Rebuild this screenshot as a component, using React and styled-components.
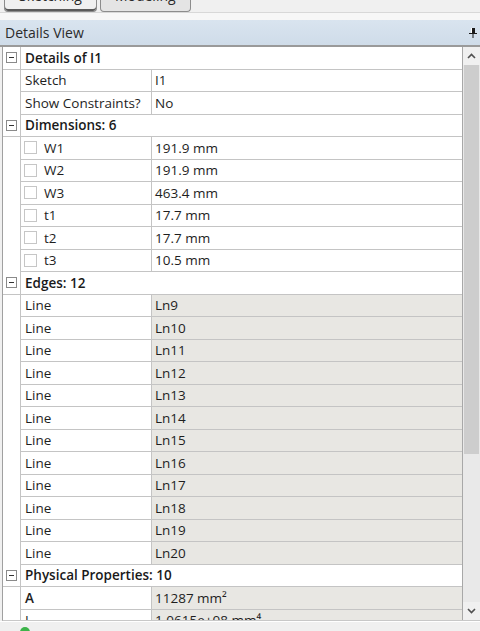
import React from "react";
import styled, { createGlobalStyle } from "styled-components";

const GlobalStyle = createGlobalStyle`
  html, body {
    margin: 0;
    padding: 0;
    background: #f0f0f0;
  }
  body {
    font-family: "Open Sans", "Noto Sans", sans-serif;
    font-size: 13.5px;
    color: #1e1e1e;
  }
`;

const Page = styled.div`
  width: 480px;
  height: 631px;
  overflow: hidden;
  display: flex;
  flex-direction: column;
  background: #f0f0f0;
`;

const TabBar = styled.div`
  height: 12px;
  display: flex;
  align-items: flex-end;
  gap: 3px;
  padding-left: 4px;
  overflow: hidden;
  border-bottom: 1px solid #d8d8d8;
`;

const Tab = styled.div`
  height: 22px;
  padding: 0 14px;
  display: flex;
  align-items: flex-start;
  line-height: 13px;
  font-size: 14px;
  color: #2a2a2a;
  background: ${(p) => (p.active ? "#f0f0f0" : "#e4e4e4")};
  border: 1px solid #8c8c8c;
  border-top: none;
  border-radius: 0 0 4px 4px;
  box-shadow: ${(p) => (p.active ? "inset 0 -2px 0 #5a5a5a" : "none")};
`;

const Gap = styled.div`
  height: 7px;
  background: #f7f7f7;
`;

const Header = styled.div`
  height: 25px;
  display: flex;
  align-items: center;
  justify-content: space-between;
  padding: 0 2px 0 5px;
  background: linear-gradient(#d9e4ef, #cfdce9);
  border-bottom: 2px solid #9a9a9a;
  font-size: 14px;
  color: #2b2b2b;
`;

const Body = styled.div`
  flex: 1;
  display: flex;
  min-height: 0;
  border-left: 1px solid #a0a0a0;
  margin-left: 2px;
  border-bottom: 1px solid #c8c8c8;
  background: #fff;
`;

const Grid = styled.div`
  flex: 1;
  overflow: hidden;
  border-right: 1px solid #a8a8a8;
`;

const Row = styled.div`
  height: 22.5px;
  box-sizing: border-box;
  display: flex;
`;

const Gutter = styled.div`
  width: 17px;
  flex: none;
  display: flex;
  align-items: center;
  justify-content: center;
  background: #fff;
  border-bottom: ${(p) => (p.cat ? "1px solid #c4c4c4" : "none")};
`;

const Toggle = styled.div`
  width: 9px;
  height: 9px;
  border: 1px solid #8a8a8a;
  background: #fff;
  position: relative;
  &::after {
    content: "";
    position: absolute;
    left: 2px;
    right: 2px;
    top: 4px;
    height: 1px;
    background: #333;
  }
`;

const Cells = styled.div`
  flex: 1;
  display: flex;
  border-left: 1px solid #c4c4c4;
  border-bottom: 1px solid #c4c4c4;
`;

const Label = styled.div`
  width: 131px;
  flex: none;
  box-sizing: border-box;
  display: flex;
  align-items: center;
  gap: 7px;
  padding-left: ${(p) => (p.check ? "3px" : "4px")};
  border-right: 1px solid #c4c4c4;
  white-space: nowrap;
  overflow: hidden;
  font-weight: ${(p) => (p.bold ? 600 : 400)};
`;

const Value = styled.div`
  flex: 1;
  display: flex;
  align-items: center;
  padding-left: 3px;
  background: ${(p) => (p.ro ? "#e8e7e3" : "#fff")};
  white-space: nowrap;
  overflow: hidden;
`;

const Category = styled.div`
  flex: 1;
  display: flex;
  align-items: center;
  padding-left: 4px;
  font-weight: 600;
  color: #1a1a1a;
`;

const Check = styled.div`
  width: 13px;
  height: 13px;
  box-sizing: border-box;
  border: 1px solid #c6c6c6;
  background: #fff;
`;

const Scrollbar = styled.div`
  width: 17px;
  flex: none;
  display: flex;
  flex-direction: column;
  background: #e9e9e9;
`;

const Arrow = styled.div`
  height: 18px;
  display: flex;
  align-items: center;
  justify-content: center;
  background: #f0f0f0;
`;

const Thumb = styled.div`
  height: 389px;
  background: #cdcdcd;
  margin: 0 1px;
`;

const Track = styled.div`
  flex: 1;
`;

const Status = styled.div`
  height: 9px;
  background: #f0f0f0;
  border-top: 1px solid #ffffff;
  position: relative;
  overflow: hidden;
`;

const Dot = styled.div`
  position: absolute;
  left: 20px;
  top: 5px;
  width: 10px;
  height: 10px;
  border-radius: 50%;
  background: #3cb44a;
`;

const Pin = () => (
  <svg width="10" height="12" viewBox="0 0 10 12">
    <path d="M3 1h4v5h2v1H1V6h2z" fill="#1a1a1a" />
    <rect x="3" y="1" width="1" height="5" fill="#fff" />
    <rect x="4.5" y="7" width="1" height="4" fill="#1a1a1a" />
  </svg>
);

const Chevron = ({ down }) => (
  <svg width="9" height="6" viewBox="0 0 9 6">
    <path
      d={down ? "M1 1l3.5 3.5L8 1" : "M1 5l3.5-3.5L8 5"}
      fill="none"
      stroke="#505050"
      strokeWidth="1.6"
    />
  </svg>
);

const sections = [
  {
    title: "Details of I1",
    rows: [
      { label: "Sketch", value: "I1" },
      { label: "Show Constraints?", value: "No" },
    ],
  },
  {
    title: "Dimensions: 6",
    rows: [
      { label: "W1", value: "191.9 mm", check: true },
      { label: "W2", value: "191.9 mm", check: true },
      { label: "W3", value: "463.4 mm", check: true },
      { label: "t1", value: "17.7 mm", check: true },
      { label: "t2", value: "17.7 mm", check: true },
      { label: "t3", value: "10.5 mm", check: true },
    ],
  },
  {
    title: "Edges: 12",
    rows: Array.from({ length: 12 }, (_, i) => ({
      label: "Line",
      value: `Ln${i + 9}`,
      ro: true,
    })),
  },
  {
    title: "Physical Properties: 10",
    rows: [
      { label: "A", value: "11287 mm²", ro: true, bold: true },
      { label: "I", value: "1.0615e+08 mm⁴", ro: true },
    ],
  },
];

export default function App() {
  return (
    <Page>
      <GlobalStyle />
      <TabBar>
        <Tab active>Sketching</Tab>
        <Tab>Modeling</Tab>
      </TabBar>
      <Gap />
      <Header>
        <span>Details View</span>
        <Pin />
      </Header>
      <Body>
        <Grid>
          {sections.map((s) => (
            <React.Fragment key={s.title}>
              <Row>
                <Gutter cat>
                  <Toggle />
                </Gutter>
                <Cells>
                  <Category>{s.title}</Category>
                </Cells>
              </Row>
              {s.rows.map((r, i) => (
                <Row key={i}>
                  <Gutter />
                  <Cells>
                    <Label check={r.check} bold={r.bold}>
                      {r.check && <Check />}
                      {r.label}
                    </Label>
                    <Value ro={r.ro}>{r.value}</Value>
                  </Cells>
                </Row>
              ))}
            </React.Fragment>
          ))}
        </Grid>
        <Scrollbar>
          <Arrow>
            <Chevron />
          </Arrow>
          <Thumb />
          <Track />
          <Arrow>
            <Chevron down />
          </Arrow>
        </Scrollbar>
      </Body>
      <Status>
        <Dot />
      </Status>
    </Page>
  );
}
